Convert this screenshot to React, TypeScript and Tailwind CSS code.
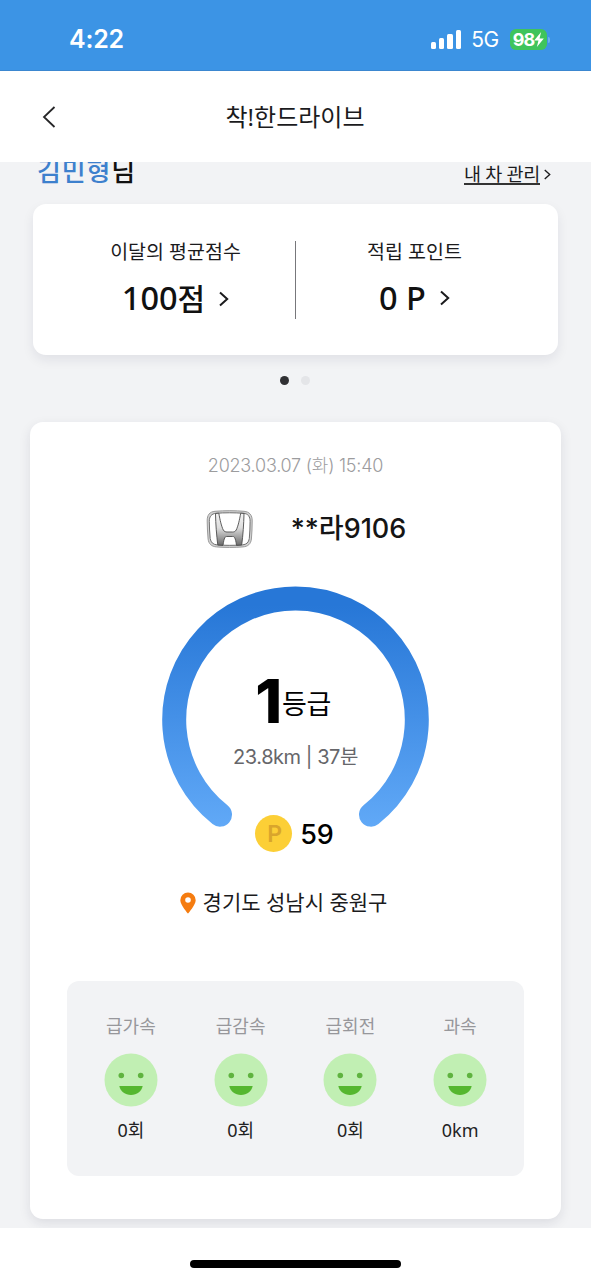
import React from "react";

const stats = [
  { label: "급가속", value: "0회" },
  { label: "급감속", value: "0회" },
  { label: "급회전", value: "0회" },
  { label: "과속", value: "0km" },
];

const Chevron = ({ className }: { className: string }) => (
  <svg className={className} viewBox="0 0 10 16" fill="none" stroke="currentColor" strokeWidth="2">
    <path d="M1 1.5L8.2 8L1 14.5" />
  </svg>
);

const Smile = () => (
  <svg className="w-[54px] h-[54px]" viewBox="0 0 54 54">
    <circle cx="27" cy="27" r="26.5" fill="#c1efb3" />
    <circle cx="17.3" cy="22.5" r="2.8" fill="#5fb33f" />
    <circle cx="36.7" cy="22.5" r="2.8" fill="#5fb33f" />
    <path d="M15.3 33H38.7C37.5 38.5 33 42 27 42S16.5 38.5 15.3 33Z" fill="#55b72f" />
  </svg>
);

const CarLogo = () => (
  <svg className="w-[48px] h-[40px]" viewBox="0 0 48 40">
    <defs>
      <linearGradient id="chrome" x1="0" y1="0" x2="0" y2="1">
        <stop offset="0" stopColor="#f4f4f4" />
        <stop offset="0.45" stopColor="#dedede" />
        <stop offset="1" stopColor="#6a6a6a" />
      </linearGradient>
    </defs>
    <path d="M9 2.3C18 1.5 30 1.5 38 2.3C43.5 2.8 46.3 6 46.2 12C46.1 18 46 24 45.4 30C44.8 35 42 37.5 37 37.9C28 38.6 19 38.6 10.500 37.9C5.500 37.5 2.700 35 2.100 30C1.500 24 1.300 18 1.200 12C1.100 6 3.500 2.800 9 2.300Z" fill="#d2d2d2" stroke="#9a9a9a" strokeWidth="1" />
    <path d="M10 4.300C18 3.600 29 3.600 37.500 4.300C42 4.700 44.200 7.500 44.100 12.500C44 18 43.900 24 43.300 29.500C42.700 33.500 40.500 35.500 36.500 35.900C28 36.500 19.500 36.500 11 35.900C7 35.500 4.900 33.500 4.200 29.500C3.600 24 3.400 18 3.300 12.500C3.200 7.500 5.500 4.700 10 4.300Z" fill="#fff" stroke="#707070" strokeWidth="1" />
    <path d="M9.500 4.500L12.800 4.200C14 11 15.500 17.500 17.300 21C18.100 22.500 19.500 23 21 23H26.500C28 23 29.400 22.500 30.200 21C32 17.500 33.500 11 34.700 4.200L38 4.500C37.800 15 37 26 35.700 36L30.500 36.400C30 32.500 29.500 30.300 28.700 28.700C28.200 27.700 27.500 27.500 26.500 27.500H21C20 27.500 19.300 27.700 18.800 28.700C18 30.300 17.500 32.500 17 36.400L11.800 36C10.500 26 9.700 15 9.500 4.500Z" fill="url(#chrome)" stroke="#4c4c4c" strokeWidth="0.9" />
  </svg>
);

const Gauge = () => (
  <svg className="w-[268px] h-[250px] [grid-area:1/1]" viewBox="0.5 0 268 250" fill="none">
    <defs>
      <linearGradient id="gauge" gradientUnits="userSpaceOnUse" x1="0" y1="0" x2="0" y2="242">
        <stop offset="0.08" stopColor="#2777d7" />
        <stop offset="1" stopColor="#61a9f7" />
      </linearGradient>
    </defs>
    <path d="M58.5 228.7A121.3 121.3 0 1 1 209.5 228.7" stroke="url(#gauge)" strokeWidth="24" strokeLinecap="round" />
  </svg>
);

const App = () => {
  return (
    <div className="w-[591px] h-[1280px] flex flex-col overflow-hidden bg-white text-[#1b1b1d] font-['Noto_Sans','Noto_Sans_CJK_KR',sans-serif] whitespace-nowrap">
      {/* status bar */}
      <div className="h-[71px] shrink-0 bg-[#3c94e5] border-b border-[#3b87d0] flex items-center justify-between pl-[69px] pr-[41px] pt-[10px] text-white font-['Inter',sans-serif]">
        <span className="text-[25px] font-semibold tracking-[-0.2px]">4:22</span>
        <div className="flex items-center">
          <div className="flex items-end gap-[3px] h-[19px] mb-px">
            <div className="w-[5px] h-[7px] rounded-[1.5px] bg-white" />
            <div className="w-[5px] h-[11px] rounded-[1.5px] bg-white" />
            <div className="w-[6px] h-[15px] rounded-[1.5px] bg-white" />
            <div className="w-[5px] h-[19px] rounded-[1.5px] bg-white" />
          </div>
          <span className="text-[21px] ml-[10px] tracking-[-0.3px]">5G</span>
          <div className="ml-[11px] mb-px h-[21px] w-[37px] rounded-[6px] bg-[#3fc45c] flex items-center justify-center">
            <span className="text-[18px] font-bold tracking-[-1px]">98</span>
            <svg className="w-[10px] h-[15px]" viewBox="0 0 9 14">
              <path d="M6.5 0L0 8H4L2.5 14L9 6H5Z" fill="#fff" />
            </svg>
          </div>
          <div className="w-[2px] h-[6px] ml-px rounded-r-full bg-[#6db1ef]" />
        </div>
      </div>

      {/* title */}
      <header className="h-[91px] shrink-0 grid grid-cols-[100px_1fr_100px] items-center">
        <svg className="w-[14px] h-[22px] ml-[42px]" viewBox="0 0 14 22" fill="none" stroke="#262628" strokeWidth="1.8">
          <path d="M12.5 1L2 11L12.5 21" />
        </svg>
        <h1 className="text-center text-[24px] leading-[30px] pr-px">착!한드라이브</h1>
      </header>

      <main className="h-[1066px] shrink-0 overflow-hidden bg-[#f2f3f5] px-[30px]">
        <div className="h-[42px] flex justify-between pl-[7px] pr-2">
          <div className="text-[26px] leading-[36px] -mt-[9px] tracking-[0.8px] font-medium text-[#111]">
            <span className="text-[#3d80cd]">김민형</span>님
          </div>
          <div className="flex items-center h-[24px] pr-[2px]">
            <span className="text-[18.5px] leading-[19px] tracking-[-0.3px] border-b-2 border-[#333]">내 차 관리</span>
            <Chevron className="w-[7px] h-[11px] ml-[4px]" />
          </div>
        </div>

        {/* score / point */}
        <section className="h-[151px] mx-[3px] rounded-[13px] bg-white shadow-[0_5px_12px_rgba(30,30,60,0.08)] grid grid-cols-[262px_1px_1fr] items-center">
          <div className="flex flex-col items-center pl-[23px]">
            <p className="text-[19.5px] leading-[28px] -mt-[2px]">이달의 평균점수</p>
            <div className="flex items-center mt-[12px]">
              <span className="text-[32.5px] leading-[40px] font-medium text-[#111]">100<span className="text-[30px]">점</span></span>
              <Chevron className="w-[10px] h-[16px] ml-[14px]" />
            </div>
          </div>
          <div className="h-[78px] w-px bg-[#77777b]" />
          <div className="flex flex-col items-center pr-[25px]">
            <p className="text-[19.5px] leading-[28px] -mt-[3px]">적립 포인트</p>
            <div className="flex items-center mt-[12px]">
              <span className="text-[32.5px] leading-[40px] font-medium text-[#111]">0 P</span>
              <Chevron className="w-[10px] h-[16px] ml-[14px]" />
            </div>
          </div>
        </section>

        <div className="h-[67px] flex justify-center gap-[12px] pt-[21px] pr-px">
          <div className="w-[9px] h-[9px] rounded-full bg-[#303033]" />
          <div className="w-[9px] h-[9px] rounded-full bg-[#e4e5e8]" />
        </div>

        {/* drive result */}
        <section className="h-[797px] rounded-[13px] bg-white shadow-[0_4px_12px_rgba(30,30,60,0.1)] flex flex-col items-center">
          <p className="mt-[31px] text-[18px] leading-[26px] tracking-[-0.23px] text-[#9c9c9e] font-light font-['Inter','Noto_Sans_CJK_KR',sans-serif]">2023.03.07 (화) 15:40</p>
          <div className="flex items-center h-[40px] mt-[30px] pl-[21px]">
            <CarLogo />
            <span className="ml-[37px] mt-px text-[27px] font-medium text-[#151515] font-['Inter','Noto_Sans_CJK_KR',sans-serif]">**라9106</span>
          </div>

          <div className="mt-[37px] h-[268px] grid justify-items-center font-['Inter','Noto_Sans_CJK_KR',sans-serif]">
            <Gauge />
            <div className="[grid-area:1/1] flex flex-col items-center">
              <div className="mt-[83px] h-[64px] flex items-start text-black pr-[5px]">
                <span className="text-[61px] leading-[64px] font-extrabold">1</span>
                <span className="text-[27px] leading-[36px] mt-[18px] tracking-[-0.5px]">등급</span>
              </div>
              <p className="mt-[10px] text-[20px] leading-[28px] tracking-[-0.45px] text-[#66666a]">23.8km | 37분</p>
              <div className="mt-[43px] flex items-center h-[38px] pr-[2px]">
                <div className="w-[37px] h-[37px] rounded-full bg-[#fccf36] text-[#d9a52c] text-[23px] font-semibold flex items-center justify-center pt-[2px] pl-[2px]">P</div>
                <span className="ml-[8px] mt-[4px] text-[27px] font-medium text-black">59</span>
              </div>
            </div>
          </div>

          <div className="mt-[31px] flex items-center h-[36px] pr-[24px]">
            <svg className="w-[16px] h-[22px]" viewBox="0 0 16 22">
              <path fillRule="evenodd" d="M8 0.5A7.7 7.7 0 0 0 0.3 8.2C0.3 13 8 21.5 8 21.5S15.7 13 15.7 8.2A7.7 7.7 0 0 0 8 0.5ZM8 5.2A2.8 2.8 0 1 1 8 10.8A2.8 2.8 0 1 1 8 5.2Z" fill="#f57c10" />
            </svg>
            <span className="ml-[7px] text-[21px]">경기도 성남시 중원구</span>
          </div>

          <div className="mt-[60px] w-[457px] h-[195px] rounded-[12px] bg-[#f2f3f5] grid grid-cols-4 px-[9px] pt-[32px] content-start">
            {stats.map((s) => (
              <div key={s.label} className="flex flex-col items-center">
                <p className="text-[18px] leading-[26px] text-[#97979b]">{s.label}</p>
                <div className="mt-[14px]"><Smile /></div>
                <p className="mt-[10px] text-[18px] leading-[26px] text-[#222]">{s.value}</p>
              </div>
            ))}
          </div>
        </section>
      </main>

      {/* home indicator */}
      <footer className="flex-1 flex justify-center pt-[32px]">
        <div className="w-[211px] h-[8px] rounded-full bg-black" />
      </footer>
    </div>
  );
};

export default App;
